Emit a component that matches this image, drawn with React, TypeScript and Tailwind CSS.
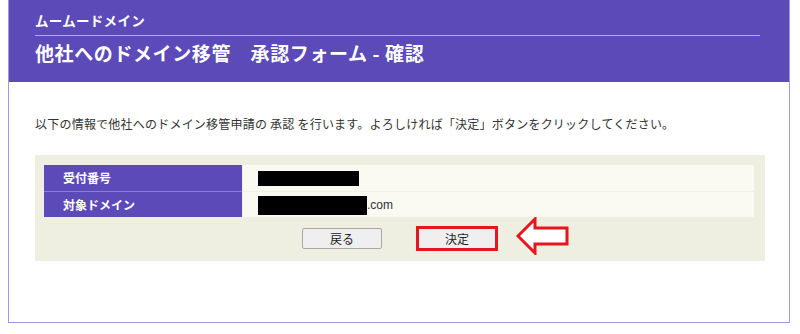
export default function App() {
  return (
    <div className="w-[800px] h-[334px] bg-white pl-2 pr-[10px] pb-[11px] font-['Noto_Sans_CJK_JP','Noto_Sans',sans-serif]">
      <div className="h-full border border-t-0 border-[#a596e0] flex flex-col">
        {/* header */}
        <div className="bg-[#5b4ab7] h-[82px] px-[26px] pt-[10px] text-white">
          <div className="text-[13.5px] font-bold leading-[20px] tracking-[0.3px]">ムームードメイン</div>
          <div className="h-px bg-[#b5abe3] mt-[5px] mr-[3px]" />
          <div className="text-[19px] font-bold leading-[26px] mt-[4px] tracking-[0.6px]">
            他社へのドメイン移管　承認フォーム - 確認
          </div>
        </div>

        <div className="px-[26px]">
          <p className="text-[12px] text-[#333] mt-[33px] leading-[18px] tracking-[0.22px]">
            以下の情報で他社へのドメイン移管申請の 承認 を行います。よろしければ「決定」ボタンをクリックしてください。
          </p>

          <div className="bg-[#efefe1] mt-[22px] w-[730px] h-[106px] pl-[9px] pr-[11px] pt-[10px]">
            <div className="flex flex-col">
              <div className="flex h-[26px]">
                <div className="w-[198px] bg-[#5b4ab7] text-white text-[12px] font-bold flex items-center pl-[19px]">受付番号</div>
                <div className="flex-1 bg-[#fafaf3] flex items-center pl-[15px] ml-px">
                  <div className="w-[101px] h-[15px] bg-black" />
                </div>
              </div>
              <div className="flex h-[26px]">
                <div className="w-[198px] bg-[#5b4ab7] border-t border-[#8c80d4] text-white text-[12px] font-bold flex items-center pl-[19px]">対象ドメイン</div>
                <div className="flex-1 bg-[#fafaf3] border-t border-[#f0f0e4] flex items-center pl-[15px] ml-px">
                  <div className="w-[109px] h-[19px] bg-black mt-[2px]" />
                  <span className="text-[12px] text-[#333] font-['Liberation_Sans',sans-serif]">.com</span>
                </div>
              </div>
            </div>

            <div className="flex items-center mt-[9px] relative">
              <button className="ml-[258px] w-[80px] h-[21px] bg-[#efefef] border border-[#a8a8a8] rounded-[2px] text-[12px] text-[#222] flex items-center justify-center">
                戻る
              </button>
              <button className="ml-[34px] w-[82px] h-[25px] border-[3px] border-[#e8141e] bg-[#efefef] text-[12px] text-[#222] flex items-center justify-center">
                決定
              </button>
              <svg className="absolute left-[472px] top-[-9px]" width="54" height="38" viewBox="0 0 54 38">
                <path d="M2 19 L19 2 L19 11 L51 11 L51 27 L19 27 L19 36 Z" fill="white" stroke="#e8141e" strokeWidth="3" strokeLinejoin="miter" />
              </svg>
            </div>
          </div>
        </div>
      </div>
    </div>
  );
}
